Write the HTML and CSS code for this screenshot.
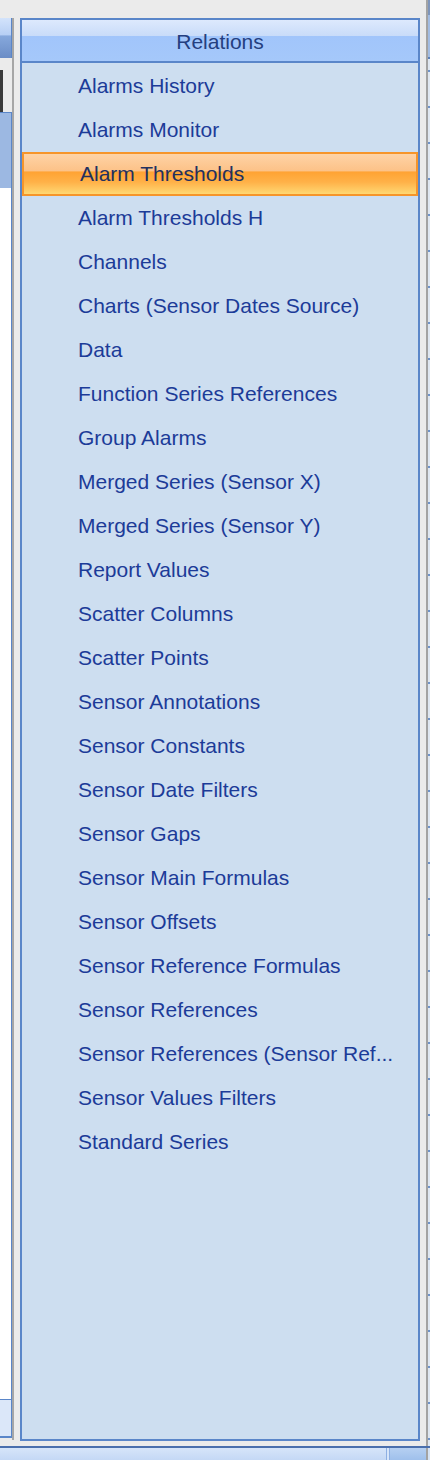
FILE: index.html
```html
<!DOCTYPE html>
<html>
<head>
<meta charset="utf-8">
<link rel="stylesheet" href="styles.css">
</head>
<body>
<div class="screen">
  <div class="workspace">
    <div class="left-pane">
      <div class="lp-head"></div>
      <div class="lp-gap"></div>
      <div class="lp-input"></div>
      <div class="lp-grid">
        <div class="lp-sel"></div>
        <div class="lp-body"></div>
        <div class="lp-foot"></div>
      </div>
    </div>
    <div class="left-edge"></div>
    <div class="relations">
      <div class="rel-head">Relations</div>
      <ul class="rel-list">
        <li class="rel-item">Alarms History</li>
        <li class="rel-item">Alarms Monitor</li>
        <li class="rel-item selected">Alarm Thresholds</li>
        <li class="rel-item">Alarm Thresholds H</li>
        <li class="rel-item">Channels</li>
        <li class="rel-item">Charts (Sensor Dates Source)</li>
        <li class="rel-item">Data</li>
        <li class="rel-item">Function Series References</li>
        <li class="rel-item">Group Alarms</li>
        <li class="rel-item">Merged Series (Sensor X)</li>
        <li class="rel-item">Merged Series (Sensor Y)</li>
        <li class="rel-item">Report Values</li>
        <li class="rel-item">Scatter Columns</li>
        <li class="rel-item">Scatter Points</li>
        <li class="rel-item">Sensor Annotations</li>
        <li class="rel-item">Sensor Constants</li>
        <li class="rel-item">Sensor Date Filters</li>
        <li class="rel-item">Sensor Gaps</li>
        <li class="rel-item">Sensor Main Formulas</li>
        <li class="rel-item">Sensor Offsets</li>
        <li class="rel-item">Sensor Reference Formulas</li>
        <li class="rel-item">Sensor References</li>
        <li class="rel-item">Sensor References (Sensor Ref...</li>
        <li class="rel-item">Sensor Values Filters</li>
        <li class="rel-item">Standard Series</li>
      </ul>
    </div>
    <div class="right-edge"></div>
    <div class="right-pane"></div>
  </div>
  <div class="statusbar">
    <div class="sb-main"></div>
    <div class="sb-div"></div>
    <div class="sb-right"></div>
    <div class="sb-edge"></div>
    <div class="sb-end"></div>
  </div>
</div>
</body>
</html>
```
FILE: styles.css
```css
html, body {
  margin: 0;
  padding: 0;
}
body {
  background: #ebebeb;
  font-family: "Liberation Sans", Arial, sans-serif;
}
.screen {
  width: 430px;
  height: 1460px;
  overflow: hidden;
  display: flex;
  flex-direction: column;
}
.workspace {
  height: 1446px;
  display: flex;
  flex-direction: row;
  align-items: flex-start;
}

/* left partial pane */
.left-pane {
  width: 12px;
  height: 1420px;
  margin-top: 18px;
  display: flex;
  flex-direction: column;
  box-sizing: border-box;
}
.lp-head {
  height: 40px;
  box-sizing: border-box;
  border-right: 1px solid #5a86c9;
  background: linear-gradient(to bottom, #d3e3fb 0%, #b7cff4 42%, #86a8dc 45%, #6b8dc6 100%);
}
.lp-gap {
  height: 12px;
}
.lp-input {
  height: 42px;
  box-sizing: border-box;
  border-left: 3px solid #3a3a3a;
}
.lp-grid {
  flex: 1;
  display: flex;
  flex-direction: column;
  border-top: 1px solid #5a86c9;
  border-right: 1px solid #5a86c9;
  border-bottom: 2px solid #5a86c9;
}
.lp-sel {
  height: 75px;
  background: #9cb8e2;
}
.lp-body {
  flex: 1;
  background: #ffffff;
}
.lp-foot {
  height: 36px;
  background: #dbe7f9;
  border-top: 1px solid #5a86c9;
}
.left-edge {
  width: 2px;
  height: 1422px;
  margin-top: 18px;
  background: #a6a6a6;
}

/* relations panel */
.relations {
  width: 400px;
  height: 1423px;
  margin-top: 18px;
  margin-left: 6px;
  box-sizing: border-box;
  border: 2px solid #5a86c9;
  background: #cddef0;
  display: flex;
  flex-direction: column;
}
.rel-head {
  height: 43px;
  flex: none;
  padding-top: 2px;
  box-sizing: border-box;
  border-bottom: 2px solid #5a86c9;
  background: linear-gradient(to bottom, #dde9fd 0%, #c9dcf9 38%, #a1c5fb 39%, #a5c8fa 100%);
  color: #243f80;
  font-size: 21px;
  display: flex;
  align-items: center;
  justify-content: center;
}
.rel-list {
  list-style: none;
  margin: 0;
  padding: 1px 0 0 0;
}
.rel-item {
  height: 44px;
  box-sizing: border-box;
  padding: 0 14px 0 56px;
  line-height: 44px;
  font-size: 21px;
  color: #1c3b98;
  white-space: nowrap;
  overflow: hidden;
}
.rel-item.selected {
  border: 2px solid #f6952a;
  line-height: 40px;
  color: #23305f;
  background: linear-gradient(to bottom, #fed3a6 0%, #fcc288 42%, #ffa333 45%, #ffb148 70%, #ffd873 100%);
}

/* right partial pane */
.right-edge {
  width: 2px;
  height: 1446px;
  margin-left: 6px;
  background: #a3a3a3;
}
.right-pane {
  width: 2px;
  height: 1446px;
  background:
    linear-gradient(to bottom, #7e95ba 0, #7e95ba 15px, #a2bce2 15px, #a2bce2 57px, #5a7fb8 57px, #5a7fb8 59px, transparent 59px),
    repeating-linear-gradient(to bottom, #dfe7f1 0, #dfe7f1 34px, #6f93c9 34px, #6f93c9 36px);
}

/* status bar */
.statusbar {
  height: 14px;
  display: flex;
  border-top: 2px solid #4a6fad;
  box-sizing: border-box;
}
.sb-main {
  width: 386px;
  background: linear-gradient(to bottom, #d6e5f9, #c4d8f5);
}
.sb-div {
  width: 4px;
  background: linear-gradient(to right, #8eb0e3 0, #8eb0e3 1px, #d6e5f9 1px, #d6e5f9 3px, #8eb0e3 3px);
}
.sb-right {
  width: 36px;
  background: linear-gradient(to bottom, #b6d0f2, #9fc0ec);
}
.sb-edge {
  width: 2px;
  background: #a3a3a3;
}
.sb-end {
  width: 2px;
  background: #d6e3f4;
}
```
